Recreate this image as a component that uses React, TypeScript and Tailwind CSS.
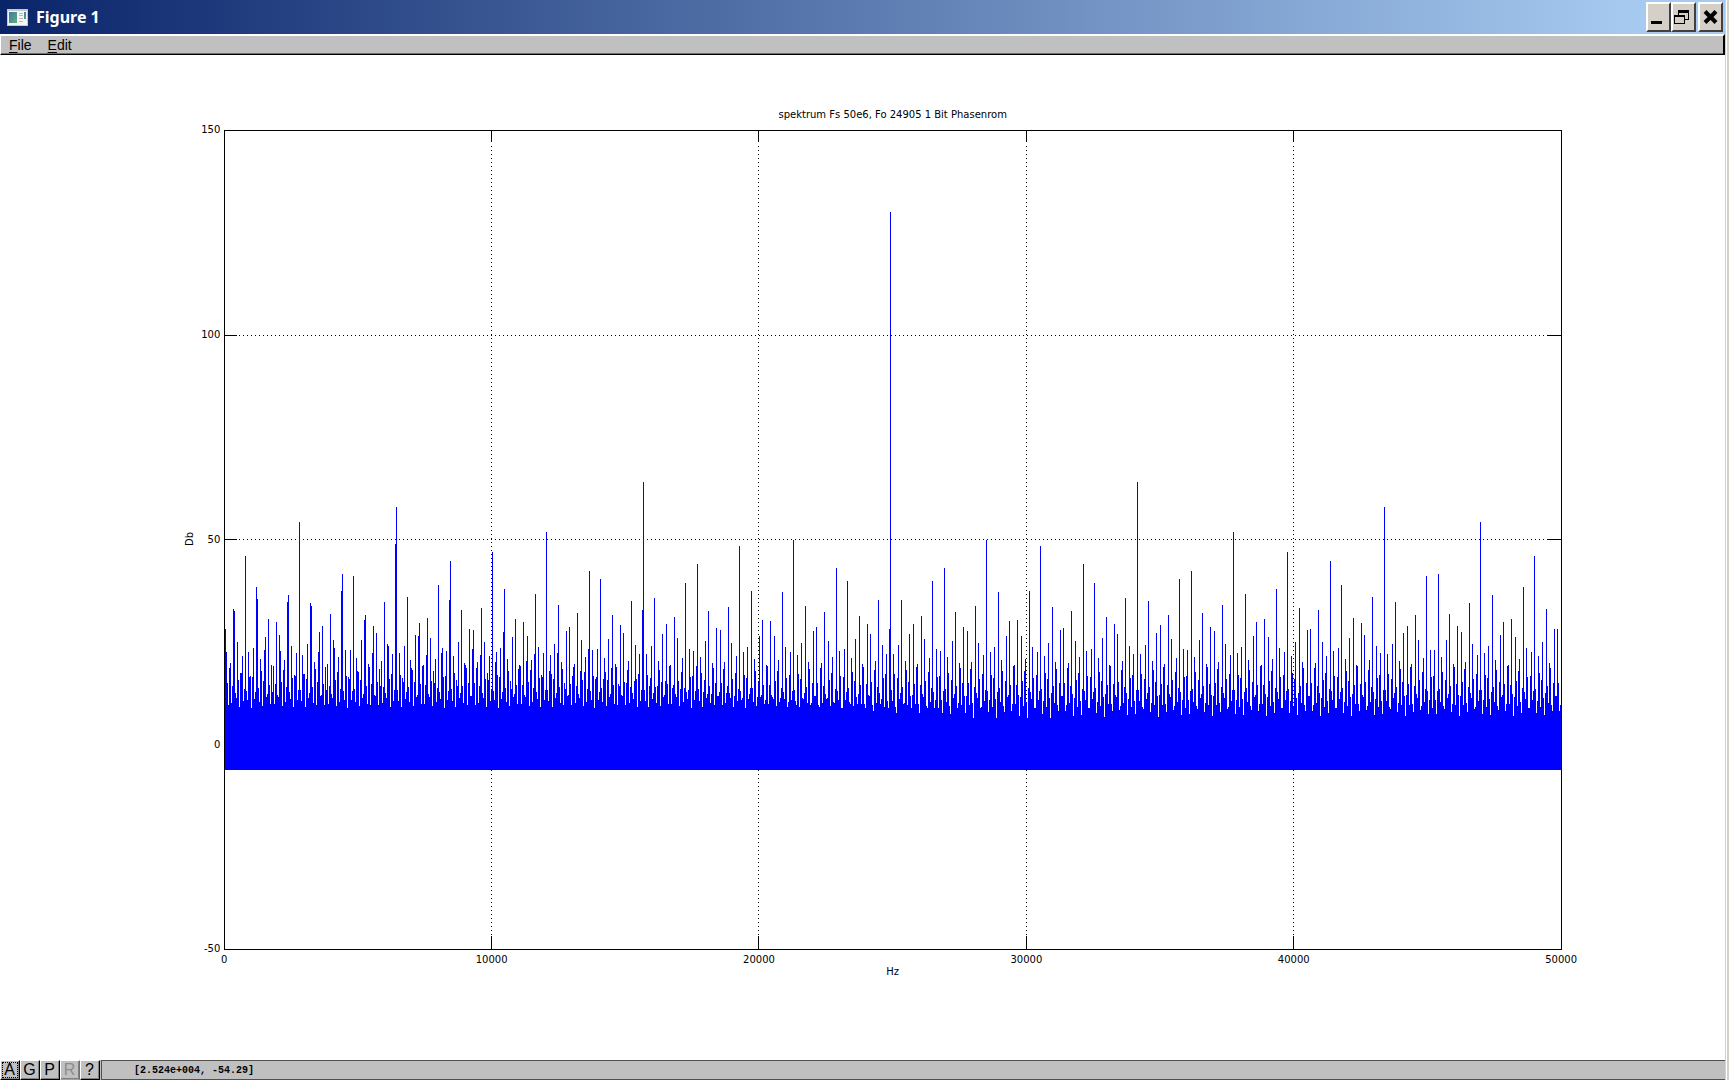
import { useLayoutEffect, useMemo, useRef, useState } from "react";

/* ---------- spectrum of a 1-bit phase ROM oscillator ---------- */

const PERIOD = 10000000; // samples per full pattern at Fs = 50 MHz
const STEP = 4981; // Fo = 24905 Hz in 5 Hz bins
const BINS = 10000; // 0 .. 50000 Hz
const FLOOR_DB = -6.02;
const Y_MIN = -50;
const Y_MAX = 150;

function modInverse(a: number, n: number) {
  let r0 = n;
  let r1 = a;
  let s0 = 0;
  let s1 = 1;
  while (r1) {
    const q = Math.floor(r0 / r1);
    [r0, r1] = [r1, r0 - q * r1];
    [s0, s1] = [s1, s0 - q * s1];
  }
  return ((s0 % n) + n) % n;
}

const INVERSE = modInverse(STEP, PERIOD);

// Only odd harmonics of the square wave carry energy; the rest sit on the floor.
const spectrum = Array.from({ length: BINS + 1 }, (_, bin) => {
  if (bin % 2 === 0) return FLOOR_DB;
  const harmonic = (bin * INVERSE) % PERIOD;
  return -20 * Math.log10(Math.sin((Math.PI * harmonic) / PERIOD));
});

// Highest point of the polyline within every pixel column.
function columnPeaks(width: number) {
  const last = Math.floor(width) - 1;
  const scale = (width - 1.2) / BINS;
  const offset = 0.24;
  const peaks = new Array<number>(last + 1).fill(FLOOR_DB);
  const put = (col: number, db: number) => {
    if (col >= 0 && col <= last && db > peaks[col]) peaks[col] = db;
  };
  for (let i = 0; i <= BINS; i++) {
    const x = i * scale + offset;
    put(Math.floor(x), spectrum[i]);
    if (i < BINS) {
      const edge = Math.floor(x + scale);
      if (edge > Math.floor(x)) {
        const t = (edge - x) / scale;
        const db = spectrum[i] + t * (spectrum[i + 1] - spectrum[i]);
        put(edge - 1, db);
        put(edge, db);
      }
    }
  }
  return peaks;
}

function spectrumPath(width: number, height: number) {
  const toY = (db: number) => Math.round(((height - 1) * (Y_MAX - db)) / (Y_MAX - Y_MIN) + 0.3);
  const base = toY(FLOOR_DB) + 1;
  const steps = columnPeaks(width).map((db, col) => `V${toY(db)}H${col + 1}`);
  return `M0 ${base}${steps.join("")}V${base}Z`;
}

/* ---------- plot ---------- */

const X_TICKS = [0, 10000, 20000, 30000, 40000, 50000];
const Y_TICKS = [150, 100, 50, 0, -50];

function Plot() {
  const box = useRef<HTMLDivElement>(null);
  const [size, setSize] = useState({ w: 1338, h: 820 });

  useLayoutEffect(() => {
    const el = box.current;
    if (!el) return;
    const measure = () => {
      const r = el.getBoundingClientRect();
      setSize({ w: Math.round(r.width) + 1, h: Math.round(r.height) + 1 });
    };
    measure();
    const ro = new ResizeObserver(measure);
    ro.observe(el);
    return () => ro.disconnect();
  }, []);

  const { w, h } = size;
  const trace = useMemo(() => spectrumPath(w, h), [w, h]);
  const xs = [1, 2, 3, 4].map((i) => Math.floor(((w - 1) * i) / 5) + 0.5);
  const ys = [1, 2, 3].map((i) => Math.floor(((h - 1) * i) / 4 + 0.3) + 0.5);

  return (
    <div ref={box} className="col-start-2 row-start-2 min-h-0 min-w-0">
      <svg
        width={w}
        height={h}
        className="block max-w-none"
        shapeRendering="crispEdges"
        fill="none"
        role="img"
        aria-label="Spectrum, level in Db over frequency in Hz"
      >
        <g stroke="#000" strokeDasharray="1 3">
          {xs.map((x) => (
            <path key={x} d={`M${x} 16V${h - 14}`} />
          ))}
          {ys.map((y) => (
            <path key={y} d={`M15 ${y}H${w - 15}`} />
          ))}
        </g>
        <g stroke="#000">
          {xs.map((x) => (
            <path key={x} d={`M${x} 0V12M${x} ${h - 14}V${h}`} />
          ))}
          {ys.map((y) => (
            <path key={y} d={`M0 ${y}H13M${w - 15} ${y}H${w}`} />
          ))}
        </g>
        <path d={trace} fill="#00f" />
        <rect x={0.5} y={0.5} width={w - 1} height={h - 1} stroke="#000" />
      </svg>
    </div>
  );
}

function Figure() {
  return (
    <main className="grid min-h-0 flex-1 grid-cols-[13fr_77.5fr_9.5fr] grid-rows-[7.5fr_81.5fr_11fr] bg-white font-['DejaVu_Sans'] text-[10px] leading-3 text-black">
      <h1 className="col-start-2 row-start-1 flex items-end justify-center pb-[9px] whitespace-nowrap">
        spektrum Fs 50e6, Fo 24905 1 Bit Phasenrom
      </h1>
      <div className="col-start-1 row-start-2 flex min-h-0 justify-end pr-1">
        <div className="flex rotate-180 items-center justify-center [writing-mode:vertical-rl]">Db</div>
        <div className="flex w-6 flex-col justify-between">
          {Y_TICKS.map((t) => (
            <div key={t} className="flex h-0 items-center justify-end">
              {t}
            </div>
          ))}
        </div>
      </div>
      <Plot />
      <div className="col-start-2 row-start-3 flex flex-col pt-[5px]">
        <div className="flex justify-between">
          {X_TICKS.map((t) => (
            <div key={t} className="flex w-0 justify-center">
              <span>{t}</span>
            </div>
          ))}
        </div>
        <div className="text-center">Hz</div>
      </div>
    </main>
  );
}

/* ---------- window chrome ---------- */

function AppIcon() {
  return (
    <svg width="21" height="17" viewBox="0 0 21 17" shapeRendering="crispEdges" aria-hidden="true">
      <defs>
        <linearGradient id="pane" x1="0" y1="0" x2="1" y2="1">
          <stop offset="0" stopColor="#3f78a8" />
          <stop offset="1" stopColor="#5fae7c" />
        </linearGradient>
      </defs>
      <rect width="21" height="17" fill="#c9c9c4" />
      <rect x="1" y="2" width="19" height="14" fill="#f6f6f4" />
      <rect x="2" y="3" width="8" height="11" fill="url(#pane)" />
      <path d="M12 4.500h4M12 6.500h4M12 9.500h4M12 12.500h4" stroke="#b9b9b4" />
      <rect x="17" y="3" width="2" height="7" fill="url(#pane)" />
    </svg>
  );
}

const CAPTION_BUTTON =
  "flex h-[30px] w-[25px] items-center justify-center border-2 border-t-white border-l-white border-r-[#404040] border-b-[#404040] bg-[#d4d0c8]";

function TitleBar() {
  return (
    <header className="flex h-[34px] items-center bg-linear-to-r/srgb from-[#0a246a] to-[#a6caf0] to-95% pr-0.5 pl-[7px]">
      <AppIcon />
      <span className="ml-2 flex-1 font-['Noto_Sans'] text-base leading-5 font-bold text-white">Figure 1</span>
      <button type="button" aria-label="Minimize" className={CAPTION_BUTTON}>
        <svg width="21" height="26" shapeRendering="crispEdges">
          <rect x="3" y="17" width="11" height="3" />
        </svg>
      </button>
      <button type="button" aria-label="Restore" className={CAPTION_BUTTON}>
        <svg width="21" height="26" shapeRendering="crispEdges">
          <path fillRule="evenodd" d="M5 6H16V16H11V15H15V9H6V11H5Z" />
          <path fillRule="evenodd" d="M1 11H12V20H1ZM2 13V19H11V13Z" />
        </svg>
      </button>
      <button type="button" aria-label="Close" className={`${CAPTION_BUTTON} ml-0.5`}>
        <svg width="21" height="26" fill="none" stroke="#000" strokeWidth="4">
          <path d="M5 7.500L16 18.500M16 7.500L5 18.500" />
        </svg>
      </button>
    </header>
  );
}

function MenuBar() {
  return (
    <nav className="flex h-[21px] items-center gap-4 border-t-2 border-r-2 border-b border-l border-t-white border-r-black border-b-black border-l-white bg-[#c0c0c0] pl-2 font-['Liberation_Sans'] text-sm leading-4 text-black shadow-[inset_0_-1px_0_#707070]">
      <button type="button">
        <span className="underline underline-offset-2">F</span>ile
      </button>
      <button type="button">
        <span className="underline underline-offset-2">E</span>dit
      </button>
    </nav>
  );
}

const TOOLS = [
  { label: "A", title: "Autoscale", focused: true },
  { label: "G", title: "Grid" },
  { label: "P", title: "Previous zoom" },
  { label: "R", title: "Rotate", disabled: true },
  { label: "?", title: "Help" },
];

function StatusBar() {
  return (
    <footer className="flex h-5 bg-[#c0c0c0]">
      {TOOLS.map((t) => (
        <button
          key={t.label}
          type="button"
          title={t.title}
          disabled={t.disabled}
          className="flex h-5 w-5 items-center justify-center border border-t-white border-r-black border-b-black border-l-white bg-[#c0c0c0] pr-px font-['Liberation_Sans'] text-base leading-4 text-black shadow-[inset_-1px_-1px_0_#808080] disabled:border-r-[#707070] disabled:border-b-[#a0a0a0] disabled:text-[#8c8c8c]"
        >
          <span
            className={t.focused ? "flex h-4 w-4 items-center justify-center border border-dotted border-black" : ""}
          >
            {t.label}
          </span>
        </button>
      ))}
      <output className="ml-px flex flex-1 items-center border-t border-b border-l border-[#505050] bg-[#c0c0c0] pt-0.5 pl-8 font-['Liberation_Mono'] text-[10px] leading-3 font-bold text-black">
        [2.524e+004, -54.29]
      </output>
    </footer>
  );
}

export default function App() {
  return (
    <div className="flex h-screen bg-[#d4d0c8]">
      <div className="flex min-w-0 flex-1 flex-col">
        <TitleBar />
        <MenuBar />
        <Figure />
        <StatusBar />
      </div>
      <div className="w-1 border-l border-[#d4d0c8] bg-[#d4d0c8] shadow-[inset_1px_0_0_#ffffff]" />
    </div>
  );
}
